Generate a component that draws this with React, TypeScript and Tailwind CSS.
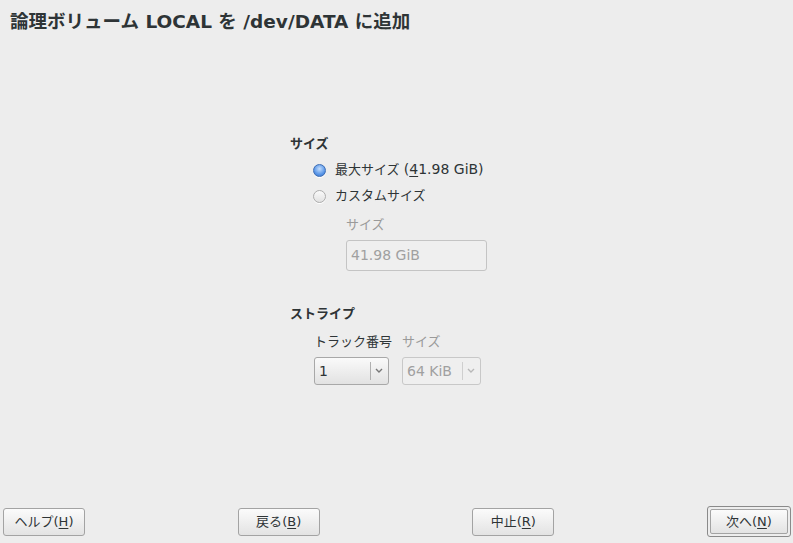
import React from 'react'

const font = { fontFamily: '"DejaVu Sans", "Noto Sans CJK JP", sans-serif' }

const Radio: React.FC<{ checked?: boolean }> = ({ checked }) => (
  <span
    className={
      checked
        ? 'inline-block w-[13px] h-[13px] rounded-full border border-[#3d6db4] bg-[radial-gradient(circle_at_50%_35%,#c4defd,#5b97e8_60%,#316fc8)] shadow-[0_1px_0_#fff]'
        : 'inline-block w-[13px] h-[13px] rounded-full border border-[#adadad] bg-gradient-to-b from-[#fafafa] to-[#e2e2e2] shadow-[0_1px_0_#fff]'
    }
  />
)

const Combo: React.FC<{ value: string; disabled?: boolean; width: string }> = ({ value, disabled, width }) => (
  <div
    className={`flex items-center h-[28px] ${width} rounded-[3px] border ${
      disabled ? 'border-[#c8c8c8] bg-[#efefef] text-[#a0a0a0]' : 'border-[#a8a8a8] bg-gradient-to-b from-[#fafafa] to-[#e2e2e2] text-[#2e3436]'
    }`}
  >
    <span className="flex-1 pl-[4px] text-[14px]">{value}</span>
    <span className={`h-[18px] w-px ${disabled ? 'bg-[#cfcfcf]' : 'bg-[#b0b0b0]'}`} />
    <svg width="16" height="10" viewBox="0 0 16 10" className="mr-[1px]">
      <path d="M5 3 L8 6 L11 3" fill="none" stroke={disabled ? '#b8b8b8' : '#777'} strokeWidth="1.4" />
    </svg>
  </div>
)

const Btn: React.FC<{ label: string; m: string; def?: boolean }> = ({ label, m, def }) => {
  const text = (
    <>
      {label}(<span className="underline underline-offset-2">{m}</span>)
    </>
  )
  if (!def)
    return (
      <div className="flex items-center justify-center h-[28px] w-[82px] rounded-[3px] border border-[#a3a3a3] bg-gradient-to-b from-[#fbfbfb] to-[#e3e3e3] text-[13px] text-[#2e3436]">
        {text}
      </div>
    )
  return (
    <div className="p-[2px] rounded-[3px] border border-[#8a8a8a]">
      <div className="flex items-center justify-center h-[25px] w-[78px] rounded-[2px] border border-[#a3a3a3] bg-gradient-to-b from-[#fbfbfb] to-[#e3e3e3] text-[13px] text-[#2e3436]">
        {text}
      </div>
    </div>
  )
}

export default function App() {
  return (
    <div className="w-[793px] h-[543px] bg-[#ededed] flex flex-col text-[#2e3436]" style={font}>
      <h1 className="pl-[10px] pt-[10px] text-[18.5px] font-bold leading-[24px] text-[#2e3436]">
        論理ボリューム LOCAL を /dev/DATA に追加
      </h1>

      <div className="pl-[290px] pt-[101px] flex flex-col text-[13px]">
        <div className="font-bold leading-[18px]">サイズ</div>
        <div className="pl-[23px] pt-[8px] flex flex-col gap-[8px]">
          <label className="flex items-center gap-[9px] h-[18px] leading-[18px]">
            <Radio checked />
            <span>
              最大サイズ{' '}
              <span className="text-[14px] leading-none">
                (<span className="underline underline-offset-2">4</span>1.98 GiB)
              </span>
            </span>
          </label>
          <label className="flex items-center gap-[9px] h-[18px] leading-[18px]">
            <Radio />
            <span>カスタムサイズ</span>
          </label>
        </div>
        <div className="pl-[56px] pt-[11px] flex flex-col">
          <span className="text-[#9a9a9a] leading-[18px]">サイズ</span>
          <div className="mt-[6px] w-[141px] h-[31px] rounded-[3px] border border-[#c4c4c4] bg-[#efefef] flex items-center pl-[4px] text-[14px] text-[#a0a0a0]">
            41.98 GiB
          </div>
        </div>

        <div className="pt-[34px] font-bold leading-[18px]">ストライプ</div>
        <div className="pl-[24px] pt-[10px] flex gap-[13px]">
          <div className="w-[75px] flex flex-col gap-[6px]">
            <span className="leading-[18px] whitespace-nowrap">トラック番号</span>
            <Combo value="1" width="w-[75px]" />
          </div>
          <div className="flex flex-col gap-[6px]">
            <span className="leading-[18px] text-[#9a9a9a]">サイズ</span>
            <Combo value="64 KiB" width="w-[79px]" disabled />
          </div>
        </div>
      </div>

      <div className="flex-1" />

      <div className="flex items-center justify-between pl-[3px] pr-[2px] pb-[6px]">
        <Btn label="ヘルプ" m="H" />
        <Btn label="戻る" m="B" />
        <Btn label="中止" m="R" />
        <Btn label="次へ" m="N" def />
      </div>
    </div>
  )
}
